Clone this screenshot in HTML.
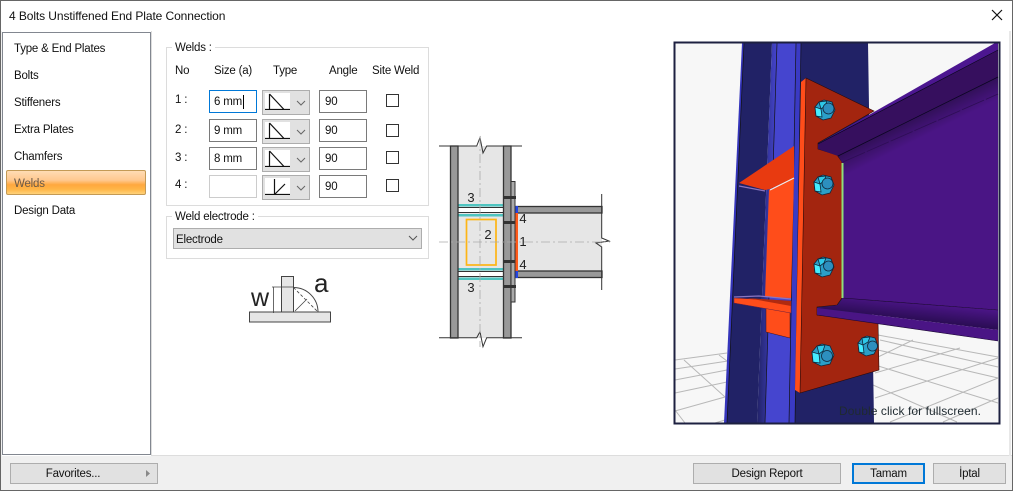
<!DOCTYPE html>
<html><head><meta charset="utf-8">
<style>
html,body{margin:0;padding:0;width:1013px;height:491px;overflow:hidden;background:#fff}
body{position:relative;font-family:"Liberation Sans",sans-serif;font-size:11.5px;letter-spacing:-.2px;color:#111}
div{position:absolute;box-sizing:border-box}
.t{white-space:nowrap;line-height:14px}
.in{background:#fff;border:1px solid #7a7a7a;width:48px;height:23px;padding:4px 0 0 5px;line-height:14px}
.cb{background:#e1e1e1;border:1px solid #adadad;width:48px;height:25px}
.cb svg{position:absolute;left:0;top:0}
.chk{width:13px;height:13px;border:1px solid #333;background:#fff}
.btn{background:#e1e1e1;border:1px solid #adadad;height:21px;text-align:center;line-height:19px;padding-top:1px}
.grp{border:1px solid #dcdcdc}
.nav{left:14px}
</style></head><body>
<div style="left:0;top:0;width:1013px;height:491px;border:1px solid #666;background:#fff"></div>
<div style="left:1px;top:456px;width:1011px;height:34px;background:#f0f0f0"></div>
<div style="left:151px;top:455px;width:861px;height:1px;background:#ddd"></div>
<div style="left:151px;top:31px;width:1px;height:424px;background:#ddd"></div>
<div style="left:1009px;top:31px;width:2px;height:425px;background:#e8e8e8"></div>
<div style="left:1px;top:31px;width:1px;height:425px;background:#f0f0f0"></div>
<div class="t" style="left:9px;top:9px;font-size:12px;letter-spacing:-.09px">4 Bolts Unstiffened End Plate Connection</div>
<svg style="position:absolute;left:991px;top:9px" width="12" height="12"><path d="M1 1L11 11M11 1L1 11" stroke="#111" stroke-width="1.2"/></svg>

<div style="left:2px;top:32px;width:149px;height:423px;border:1px solid #828790;background:#fff"></div>
<div class="t nav" style="top:42px">Type &amp; End Plates</div>
<div class="t nav" style="top:69px">Bolts</div>
<div class="t nav" style="top:96px">Stiffeners</div>
<div class="t nav" style="top:123px">Extra Plates</div>
<div class="t nav" style="top:150px">Chamfers</div>
<div style="left:6px;top:170px;width:140px;height:25px;border:1px solid #c49a55;border-radius:2px;background:linear-gradient(#ffdcb4 0%,#ffc88f 40%,#ffa83e 60%,#ffb648 80%,#ffd27a 100%)"></div>
<div class="t nav" style="top:177px;color:#6b5a48">Welds</div>
<div class="t nav" style="top:204px">Design Data</div>

<div class="grp" style="left:166px;top:47px;width:263px;height:159px"></div>
<div class="t" style="left:172px;top:41px;background:#fff;padding:0 3px">Welds :</div>
<div class="t" style="left:175px;top:64px">No</div>
<div class="t" style="left:214px;top:64px">Size (a)</div>
<div class="t" style="left:273px;top:64px">Type</div>
<div class="t" style="left:329px;top:64px">Angle</div>
<div class="t" style="left:372px;top:64px">Site Weld</div>
<div class="t" style="left:175px;top:93px">1 :</div>
<div class="t" style="left:175px;top:123px">2 :</div>
<div class="t" style="left:175px;top:151px">3 :</div>
<div class="t" style="left:175px;top:178px">4 :</div>

<div class="in" style="left:209px;top:90px;border-color:#0078d7;padding-left:4px">6 mm<span style="display:inline-block;width:1px;height:14px;background:#000;vertical-align:top;margin-left:1px"></span></div>
<div class="in" style="left:209px;top:119px;padding-left:4px">9 mm</div>
<div class="in" style="left:209px;top:147px;padding-left:4px">8 mm</div>
<div class="in" style="left:209px;top:175px;border-color:#ccc"></div>

<div class="cb" style="left:262px;top:90px"><svg width="46" height="23"><rect x="2" y="2" width="25" height="18" fill="#fff"/><path d="M2 18.500H27M6.500 3V18.500M6.500 3L21 18.500" stroke="#111" stroke-width="1.200" fill="none"/><path d="M34 10L38 14L42 10" stroke="#666" fill="none"/></svg></div>
<div class="cb" style="left:262px;top:119px"><svg width="46" height="23"><rect x="2" y="2" width="25" height="18" fill="#fff"/><path d="M2 18.500H27M6.500 3V18.500M6.500 3L21 18.500" stroke="#111" stroke-width="1.200" fill="none"/><path d="M34 10L38 14L42 10" stroke="#666" fill="none"/></svg></div>
<div class="cb" style="left:262px;top:147px"><svg width="46" height="23"><rect x="2" y="2" width="25" height="18" fill="#fff"/><path d="M2 18.500H27M6.500 3V18.500M6.500 3L21 18.500" stroke="#111" stroke-width="1.200" fill="none"/><path d="M34 10L38 14L42 10" stroke="#666" fill="none"/></svg></div>
<div class="cb" style="left:262px;top:175px"><svg width="46" height="23"><rect x="2" y="2" width="25" height="18" fill="#fff"/><path d="M2 18.500H27M11.500 3V18.500M11.500 18.500L22 8" stroke="#111" stroke-width="1.200" fill="none"/><path d="M34 10L38 14L42 10" stroke="#666" fill="none"/></svg></div>

<div class="in" style="left:319px;top:90px">90</div>
<div class="in" style="left:319px;top:119px">90</div>
<div class="in" style="left:319px;top:147px">90</div>
<div class="in" style="left:319px;top:175px">90</div>
<div class="chk" style="left:386px;top:94px"></div>
<div class="chk" style="left:386px;top:124px"></div>
<div class="chk" style="left:386px;top:151px"></div>
<div class="chk" style="left:386px;top:179px"></div>

<div class="grp" style="left:166px;top:216px;width:263px;height:43px"></div>
<div class="t" style="left:172px;top:210px;background:#fff;padding:0 3px">Weld electrode :</div>
<div style="left:173px;top:228px;width:249px;height:21px;background:#e1e1e1;border:1px solid #adadad;padding:4px 0 0 2px;line-height:14px">Electrode</div>
<svg style="position:absolute;left:407px;top:234px" width="12" height="8"><path d="M2 2L6 6L10 2" stroke="#555" fill="none"/></svg>

<svg style="position:absolute;left:0;top:0" width="1013" height="491" viewBox="0 0 1013 491">
<defs>
<linearGradient id="wg" gradientUnits="userSpaceOnUse" x1="918" y1="117" x2="927" y2="135"><stop offset="0" stop-color="#32105a"/><stop offset="1" stop-color="#4a1585"/></linearGradient>
<linearGradient id="fg" gradientUnits="userSpaceOnUse" x1="920" y1="303" x2="918" y2="322"><stop offset="0" stop-color="#4a1585"/><stop offset="1" stop-color="#280c50"/></linearGradient>
<linearGradient id="cg" x1="0" x2="1" y1="0" y2="0"><stop offset="0" stop-color="#212266"/><stop offset="1" stop-color="#4545cf"/></linearGradient>
</defs>
<!-- w/a diagram -->
<g stroke="#444" stroke-width="1">
<rect x="249.500" y="312" width="81" height="10" fill="#e6e6e6"/>
<rect x="281.500" y="276.500" width="12" height="35.500" fill="#e6e6e6"/>
<path d="M293.500 287.500A24.500 24.500 0 0 1 318 312" fill="#fff"/>
<path d="M293.500 287.500L318 312" stroke-dasharray="3 2" stroke-width=".8"/>
<path d="M295 311L307 299" stroke-width=".8"/>
<path d="M273.500 287V313M272 287H293" stroke-width=".8"/>
</g>
<text x="251" y="306" font-size="25" fill="#222" font-family="Liberation Sans" letter-spacing="0">w</text>
<text x="314" y="292" font-size="26" fill="#222" font-family="Liberation Sans" letter-spacing="0">a</text>

<!-- section drawing -->
<rect x="458" y="146" width="45" height="192" fill="#e6e6e6"/>
<rect x="516" y="213" width="86" height="58" fill="#e6e6e6"/>
<rect x="458" y="207" width="45" height="6" fill="#fff"/>
<rect x="458" y="272" width="45" height="5" fill="#fff"/>
<g fill="#4fc4c0">
<rect x="458" y="204" width="45" height="2.500"/><rect x="458" y="214" width="45" height="2.500"/>
<rect x="458" y="268" width="45" height="2.500"/><rect x="458" y="277.500" width="45" height="2.500"/>
</g>
<g stroke="#333" stroke-width="1.300">
<path d="M458 207.500H503M458 212.500H503M458 271.500H503M458 276.500H503" fill="none" stroke-width="1"/>
<rect x="450.500" y="146" width="7.500" height="192" fill="#999"/>
<rect x="503.500" y="146" width="7.500" height="192" fill="#999"/>
<rect x="511" y="181.500" width="4" height="120.500" fill="#aaa" stroke-width="1"/>
<rect x="516" y="206.500" width="86" height="6.500" fill="#999"/>
<rect x="516" y="271" width="86" height="6.500" fill="#999"/>
<path d="M601.700 194V238L609 241L596 243L601.700 247V290M439 146H476.700L480 137.500L483 153L486.700 146H522M439 337.700H476.700L480 331.700L483 346.700L486.700 337.700H522" fill="none" stroke-width="1"/>
</g>
<rect x="466.500" y="219.500" width="29.500" height="45.500" fill="none" stroke="#fdb515" stroke-width="1.700"/>
<g fill="#333">
<rect x="503" y="196" width="13" height="3"/><rect x="503" y="221" width="13" height="3"/><rect x="503" y="260" width="13" height="3"/><rect x="503" y="285" width="13" height="3"/>
</g>
<rect x="515.500" y="213" width="2.500" height="58" fill="#ff5a1a"/>
<rect x="515.500" y="206" width="2.500" height="7" fill="#2545e0"/>
<rect x="515.500" y="271" width="2.500" height="7" fill="#2545e0"/>
<path d="M439 242H610M480 137V347" stroke="#aaa" stroke-width=".8" stroke-dasharray="9 3 2 3" fill="none"/>
<g font-size="13" fill="#222" font-family="Liberation Sans" text-anchor="middle" letter-spacing="0">
<text x="471" y="202">3</text><text x="523" y="223">4</text><text x="488" y="239">2</text><text x="523" y="246">1</text><text x="523" y="269">4</text><text x="471" y="292">3</text>
</g>

<!-- 3D view -->
<rect x="674.500" y="42.500" width="325" height="381" fill="#f7f7f7"/>
<path d="M675 360L727 353M675 369L728 361M675 380L727 370M675 393L727 382M675 411L725 397M684 360L725 397M719 355L727 361M675 410L685 423M715 423L725 420M878 335L998 357M880 340L998 367M878 350L998 378M875 365L998 403M873 385L957 422M878 357L913 340M875 373L960 348M875 398L998 358M890 422L998 378M943 422L998 398" stroke="#b8b8b8" stroke-width="1" fill="none"/>

<!-- column -->
<polygon points="743,43 772,43 757,423 725,423" fill="#212266"/>
<polygon points="772,43 777,43 765,423 757,423" fill="url(#cg)"/>
<polygon points="777,43 796,43 789,423 765,423" fill="#4545cf"/>
<polygon points="796,43 801,43 795,423 789,423" fill="#3a3ac4"/>
<polygon points="801,43 868,43 874,423 795,423" fill="#212266"/>
<polygon points="742,43 744,43 727,423 724,423" fill="#3535bb"/>
<path d="M777 43L765 423M796 43L789 423M801 43L795 423M744 43L727 423" stroke="#111" stroke-width=".7" fill="none"/>

<!-- stiffeners -->
<polygon points="769,190 794,178 791,298 765,297" fill="#ff4d1a"/>
<polygon points="766,306 790,312 790,338 766,332" fill="#ff4d1a" stroke="#40101a" stroke-width=".5"/>
<polygon points="739,183 794,146 794,178 770,189 765,190" fill="#e83a10"/>
<path d="M770 190L794 178" stroke="#eee" stroke-width="1.200"/>
<path d="M739 186L765 191" stroke="#8a75c0" stroke-width="1.200"/>
<path d="M734 297L759 296L791 299" stroke="#8a75c0" stroke-width="1.200" fill="none"/>
<polygon points="734,298 791,301 791,313 734,303" fill="#ff4d1a" stroke="#6a2040" stroke-width=".5"/>
<polygon points="747,298 791,301 791,306" fill="#b02a10"/>

<!-- end plate -->
<polygon points="801,82 806,78 800,393 795,390" fill="#ff4d1a"/>
<polygon points="806,78 874,111 818,143 818,149 837,155 842,162 842,298 837,305 817,307 817,315 878,322 879,370 800,393" fill="#a3250f" stroke="#2a0a08" stroke-width=".6"/>

<!-- beam -->
<polygon points="838,156 998,77 998,310 843,298 843,164" fill="url(#wg)"/>
<path d="M843 162L998 94" stroke="#2e0e55" stroke-dasharray="24 2" stroke-width=".8" fill="none"/>
<polygon points="818,144 995,43 998,43 998,50" fill="#4c1690"/>
<polygon points="818,144 998,50 998,77 838,156 818,149" fill="#360f5e"/>
<path d="M818 144L998 50M838 156L998 77" stroke="#0a0520" stroke-width=".7" fill="none"/>
<polygon points="817,308 838,305 843,298 998,310 998,330" fill="url(#fg)"/>
<polygon points="817,308 998,330 998,341 817,315" fill="#4a1585"/>
<path d="M843 298L998 310M817 315L998 341" stroke="#1a0830" stroke-width=".6" fill="none"/>
<rect x="841.500" y="163" width="2" height="135" fill="#8fe07a"/>

<!-- bolts -->
<g stroke="#10283c" stroke-width=".8">
<g transform="translate(825,110)"><polygon points="-1,-10 7,-8 10,0 6,8 -2,10 -9,6 -10,-3 -6,-8" fill="#2b9fc8"/><polygon points="-10,-3 -4,-1 -3,7 -9,6" fill="#45ecff"/><polygon points="-6,-8 2,-9 0,-4 -4,-1" fill="#2fc8e8"/><circle cx="3.500" cy="-1.500" r="5.500" fill="#2d8fbf"/></g>
<g transform="translate(824,185)"><polygon points="-1,-10 7,-8 10,0 6,8 -2,10 -9,6 -10,-3 -6,-8" fill="#2b9fc8"/><polygon points="-10,-3 -4,-1 -3,7 -9,6" fill="#45ecff"/><polygon points="-6,-8 2,-9 0,-4 -4,-1" fill="#2fc8e8"/><circle cx="3.500" cy="-1.500" r="5.500" fill="#2d8fbf"/></g>
<g transform="translate(824,267)"><polygon points="-1,-10 7,-8 10,0 6,8 -2,10 -9,6 -10,-3 -6,-8" fill="#2b9fc8"/><polygon points="-10,-3 -4,-1 -3,7 -9,6" fill="#45ecff"/><polygon points="-6,-8 2,-9 0,-4 -4,-1" fill="#2fc8e8"/><circle cx="4.500" cy="-1" r="5" fill="#2d8fbf"/></g>
<g transform="translate(823,355)"><polygon points="-1,-11 7,-9 11,0 7,9 -2,11 -10,7 -11,-3 -6,-9" fill="#2b9fc8"/><polygon points="-11,-3 -4,-1 -3,8 -10,7" fill="#45ecff"/><polygon points="-6,-9 2,-10 0,-4 -4,-1" fill="#2fc8e8"/><circle cx="4" cy="1" r="5.500" fill="#2d8fbf"/></g>
<g transform="translate(868,346)"><polygon points="-1,-10 7,-8 10,0 6,8 -2,10 -9,6 -10,-3 -6,-8" fill="#2b9fc8"/><polygon points="-10,-3 -5,-1 -4,7 -9,6" fill="#45ecff"/><polygon points="-6,-8 2,-9 0,-4 -5,-1" fill="#2fc8e8"/><circle cx="4.500" cy="0" r="5" fill="#2d8fbf"/></g>
</g>
<text x="839" y="415" font-size="12" fill="#1f2a30" font-family="Liberation Sans" textLength="142" letter-spacing="0">Double click for fullscreen.</text>
<rect x="674.500" y="42.500" width="325" height="381" fill="none" stroke="#1d2040" stroke-width="2"/>
</svg>

<div class="btn" style="left:10px;top:463px;width:148px;padding-right:22px">Favorites...</div>
<svg style="position:absolute;left:146px;top:470px" width="5" height="7"><path d="M0 0L4 3.500L0 7Z" fill="#888"/></svg>
<div class="btn" style="left:693px;top:463px;width:148px">Design Report</div>
<div class="btn" style="left:852px;top:463px;width:73px;border:2px solid #0078d7;line-height:17px">Tamam</div>
<div class="btn" style="left:933px;top:463px;width:73px">İptal</div>
</body></html>
